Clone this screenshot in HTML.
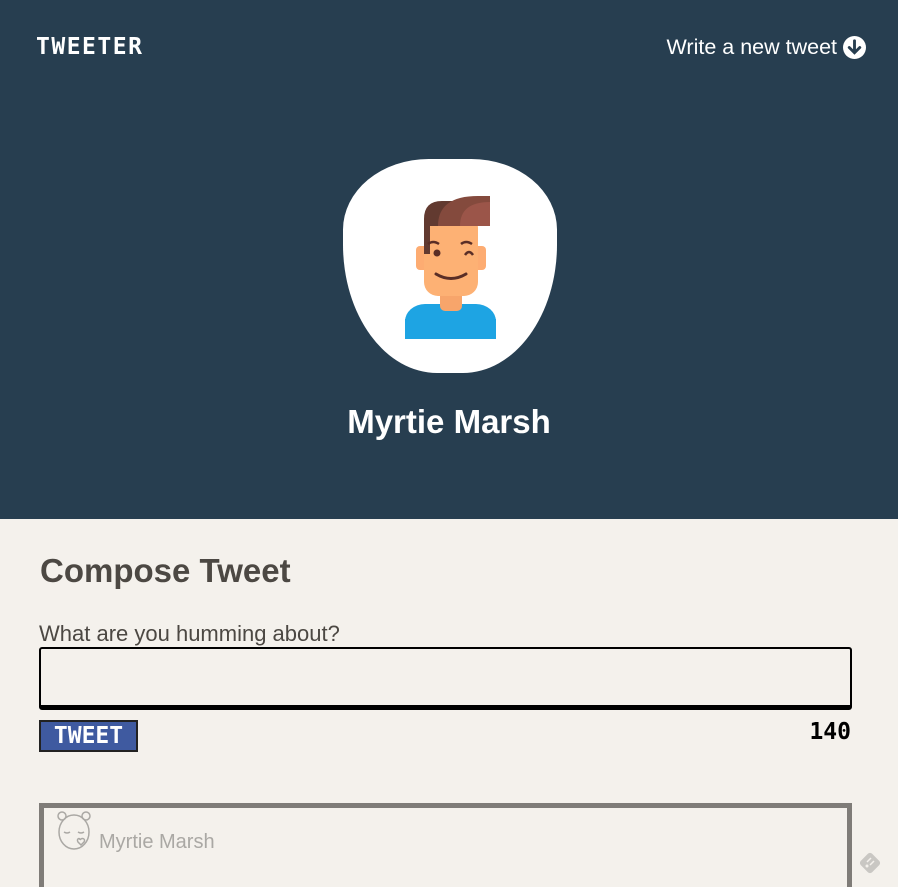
<!DOCTYPE html>
<html style="overflow:hidden;height:887px"><head><style>
*{margin:0;padding:0;box-sizing:border-box}
body{width:898px;height:887px;overflow:hidden;background:#f4f1ec;font-family:"Liberation Sans",sans-serif;position:relative}
header{position:absolute;left:0;top:0;width:898px;height:519px;background:#273e50}
.logo{position:absolute;left:36px;top:34px;color:#fff;font:bold 23px "DejaVu Sans Mono",monospace;letter-spacing:1.5px}
.write{position:absolute;right:32px;top:35px;color:#fff;font-size:21.5px;display:flex;align-items:center;gap:6px}
.blob{position:absolute;left:343px;top:159px;width:214px;height:214px;background:#fff;border-radius:40% 40% 44% 44% / 33% 33% 60% 60%}
.name{position:absolute;left:0;width:898px;top:403px;text-align:center;color:#fff;font-size:33px;font-weight:bold}
h2{position:absolute;left:40px;top:552px;font-size:33px;color:#4c4843}
.lbl{position:absolute;left:39px;top:621px;font-size:22px;color:#4c4843}
.ta{position:absolute;left:39px;top:647px;width:813px;height:63px;border:2px solid #000;border-bottom:5px solid #000;border-radius:3px}
.btn{position:absolute;left:39px;top:720px;width:99px;height:32px;background:#3f5aa0;border:2px solid #222;color:#fff;font:bold 23px "DejaVu Sans Mono",monospace;text-align:center;line-height:28px}
.cnt{position:absolute;right:47px;top:719px;font:bold 23px "DejaVu Sans Mono",monospace;color:#000}
.art{position:absolute;left:39px;top:803px;width:813px;height:120px;border:5px solid #7f7c78}
.an{position:absolute;left:99px;top:831px;font-size:20px;color:#aaa8a4}
</style></head><body>
<header>
<div class="logo">TWEETER</div>
<div class="write">Write a new tweet <svg width="23" height="23" viewBox="0 0 24 24"><circle cx="12" cy="12" r="12" fill="#fff"/><path d="M12 5v12M6.5 12l5.5 5.5 5.5-5.5" stroke="#273e50" stroke-width="3" fill="none" stroke-linecap="round"/></svg></div>
<div class="blob"></div>
<svg style="position:absolute;left:405px;top:194px" width="92" height="146" viewBox="0 0 92 146">
<rect x="0" y="110" width="91" height="35" rx="20" fill="#1ea4e3"/><rect x="0" y="125" width="91" height="20" fill="#1ea4e3"/>
<rect x="35" y="85" width="22" height="32" rx="5" fill="#f7a56b"/>
<rect x="11" y="52" width="12" height="24" rx="4" fill="#fdac72"/><rect x="69" y="52" width="12" height="24" rx="4" fill="#fdac72"/>
<rect x="19" y="20" width="54" height="82" rx="14" fill="#fdb174"/>
<path d="M19 60V25q0-18 18-18h30v25H25v28z" fill="#623a30"/>
<path d="M33 32q0-30 40-30h12v20H73v10z" fill="#844a3d"/>
<path d="M55 32q0-24 30-24v24z" fill="#9b5549"/>
<circle cx="32" cy="59" r="3.5" fill="#5a2e26"/>
<path d="M60 61q4-6 8 0" stroke="#5a2e26" stroke-width="2.5" fill="none"/>
<path d="M31 80q15 9 30 0" stroke="#5a2e26" stroke-width="3" fill="none" stroke-linecap="round"/>
<path d="M23 50q5-4 11 0M56 50q5-4 11 0" stroke="#5a2e26" stroke-width="2.5" fill="none"/>
</svg>
<div class="name">Myrtie Marsh</div>
</header>
<h2>Compose Tweet</h2>
<div class="lbl">What are you humming about?</div>
<div class="ta"></div>
<div class="btn">TWEET</div>
<div class="cnt">140</div>
<div class="art"></div>
<svg style="position:absolute;left:56px;top:810px" width="36" height="42" viewBox="0 0 36 42" fill="none" stroke="#aaa8a4" stroke-width="1.5"><circle cx="6" cy="6" r="4"/><circle cx="30" cy="6" r="4"/><ellipse cx="18" cy="22" rx="15" ry="17"/><path d="M8 22q3 2 6 0M22 22q3 2 6 0"/><path d="M24 30c2-3 6-1 4 2l-3 3-3-3c-2-3 2-5 2-2"/></svg>
<div class="an">Myrtie Marsh</div>
<svg style="position:absolute;left:857px;top:850px" width="26" height="26" viewBox="0 0 26 26"><rect x="5" y="5" width="16" height="16" rx="3" transform="rotate(45 13 13)" fill="#c9c7c3"/><circle cx="10" cy="16" r="1.5" fill="#f4f1ec"/><path d="M10 12l4-4M13 15l4-4" stroke="#f4f1ec" stroke-width="1.5"/></svg>
</body></html>
